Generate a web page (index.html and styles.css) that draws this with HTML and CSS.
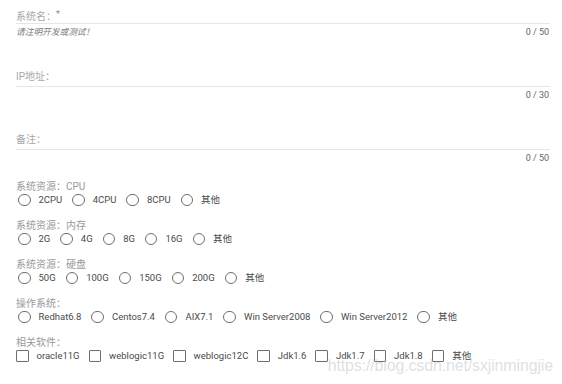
FILE: index.html
```html
<!DOCTYPE html>
<html lang="zh">
<head>
<meta charset="utf-8">
<title>Form</title>
<link rel="stylesheet" href="styles.css">
</head>
<body>
<div class="form">
  <div class="field">
    <div class="f-label">系统名：<span class="req">*</span></div>
    <div class="f-line"></div>
    <div class="f-hint"><span class="hint">请注明开发或测试！</span><span class="count">0 / 50</span></div>
  </div>
  <div class="field">
    <div class="f-label">IP地址：</div>
    <div class="f-line"></div>
    <div class="f-hint"><span class="hint"></span><span class="count">0 / 30</span></div>
  </div>
  <div class="field">
    <div class="f-label">备注：</div>
    <div class="f-line"></div>
    <div class="f-hint"><span class="hint"></span><span class="count">0 / 50</span></div>
  </div>

  <div class="group">
    <div class="g-label">系统资源：CPU</div>
    <div class="opts">
      <span class="opt"><i class="radio"></i>2CPU</span>
      <span class="opt"><i class="radio"></i>4CPU</span>
      <span class="opt"><i class="radio"></i>8CPU</span>
      <span class="opt"><i class="radio"></i>其他</span>
    </div>
  </div>
  <div class="group">
    <div class="g-label">系统资源：内存</div>
    <div class="opts">
      <span class="opt"><i class="radio"></i>2G</span>
      <span class="opt"><i class="radio"></i>4G</span>
      <span class="opt"><i class="radio"></i>8G</span>
      <span class="opt"><i class="radio"></i>16G</span>
      <span class="opt"><i class="radio"></i>其他</span>
    </div>
  </div>
  <div class="group">
    <div class="g-label">系统资源：硬盘</div>
    <div class="opts">
      <span class="opt"><i class="radio"></i>50G</span>
      <span class="opt"><i class="radio"></i>100G</span>
      <span class="opt"><i class="radio"></i>150G</span>
      <span class="opt"><i class="radio"></i>200G</span>
      <span class="opt"><i class="radio"></i>其他</span>
    </div>
  </div>
  <div class="group">
    <div class="g-label">操作系统：</div>
    <div class="opts">
      <span class="opt"><i class="radio"></i>Redhat6.8</span>
      <span class="opt"><i class="radio"></i>Centos7.4</span>
      <span class="opt"><i class="radio"></i>AIX7.1</span>
      <span class="opt"><i class="radio"></i>Win Server2008</span>
      <span class="opt"><i class="radio"></i>Win Server2012</span>
      <span class="opt"><i class="radio"></i>其他</span>
    </div>
  </div>
  <div class="group">
    <div class="g-label">相关软件：</div>
    <div class="opts">
      <span class="opt"><i class="check"></i>oracle11G</span>
      <span class="opt"><i class="check"></i>weblogic11G</span>
      <span class="opt"><i class="check"></i>weblogic12C</span>
      <span class="opt"><i class="check"></i>Jdk1.6</span>
      <span class="opt"><i class="check"></i>Jdk1.7</span>
      <span class="opt"><i class="check"></i>Jdk1.8</span>
      <span class="opt"><i class="check"></i>其他</span>
    </div>
  </div>
</div>
<div class="watermark">https://blog.csdn.net/sxjinmingjie</div>
</body>
</html>
```

FILE: styles.css
```css
html, body {
  margin: 0;
  padding: 0;
  background: #fff;
}
body {
  font-family: Roboto, "Noto Sans CJK SC", sans-serif;
  position: relative;
  width: 562px;
  height: 384px;
  overflow: hidden;
}
.form {
  padding: 7px 12px 0 16px;
}
.field + .field {
  margin-top: 30px;
}
.f-label {
  height: 14px;
  line-height: 14px;
  font-size: 10px;
  color: #a8a8a8;
}
.req {
  font-size: 9px;
  vertical-align: 3px;
  color: #888;
}
.f-line {
  height: 2px;
  border-bottom: 1px solid #e6e6e6;
}
.f-hint {
  display: flex;
  justify-content: space-between;
  height: 16px;
  line-height: 16px;
  font-size: 9px;
}
.hint {
  font-style: italic;
  font-size: 8.7px;
  color: #7a7a7a;
}
.count {
  color: #666;
  padding-right: 1px;
}
.group {
  margin-top: 13px;
}
.field + .group {
  margin-top: 15px;
}
.g-label {
  height: 12px;
  line-height: 12px;
  font-size: 10px;
  color: #9a9a9a;
}
.opts {
  display: flex;
  align-items: center;
  gap: 10px;
  height: 14px;
  padding-left: 2px;
  font-size: 9.5px;
  color: #4a4a4a;
}
.opt {
  display: flex;
  align-items: center;
  gap: 8px;
  line-height: 14px;
}
.radio {
  display: block;
  width: 10.5px;
  height: 10.5px;
  border: 1.3px solid #6f6f6f;
  border-radius: 50%;
}
.check {
  display: block;
  width: 10.5px;
  height: 10.5px;
  border: 1.3px solid #6f6f6f;
  border-radius: 1px;
}
.group:last-child .opts {
  padding-left: 0;
  gap: 9px;
}
.watermark {
  position: absolute;
  right: 9px;
  top: 357px;
  font-family: "Liberation Sans", Arial, sans-serif;
  font-size: 16px;
  letter-spacing: -0.15px;
  color: rgba(160, 160, 160, 0.35);
}
```
